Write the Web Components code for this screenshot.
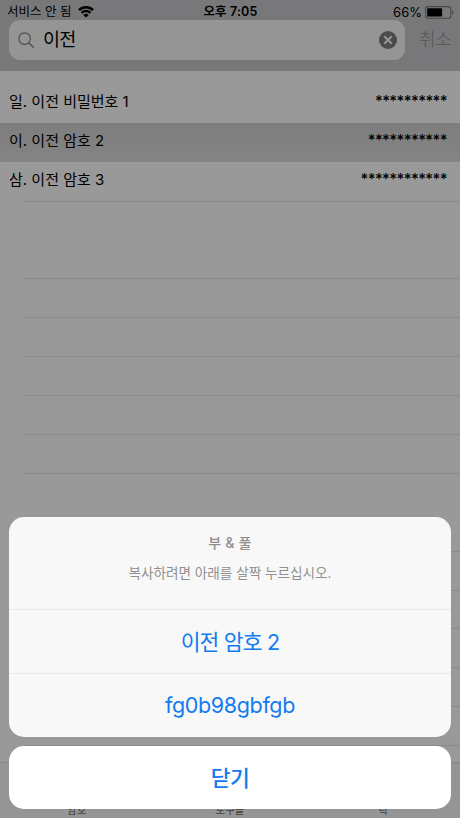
<!DOCTYPE html>
<html lang="ko">
<head>
<meta charset="utf-8">
<title>암호</title>
<style>
  html, body {
    margin: 0;
    height: 100%;
    overflow: hidden;
    background: #999;
  }
  body {
    font-family: Inter, "Noto Sans CJK KR", sans-serif;
    color: #000;
  }
</style>
</head>
<body>
<phone-screen>
  <status-bar carrier="서비스 안 됨" time="오후 7:05" battery="66"></status-bar>
  <search-bar value="이전" cancel="취소"></search-bar>
  <password-list>
    <password-row secret="**********">일. 이전 비밀번호 1</password-row>
    <password-row secret="***********" selected>이. 이전 암호 2</password-row>
    <password-row secret="************" last>삼. 이전 암호 3</password-row>
  </password-list>
  <tab-bar slot="tabs">
    <span>암호</span>
    <span>도구들</span>
    <span>락</span>
  </tab-bar>
  <action-sheet slot="overlay">
    <span slot="title">부 &amp; 풀</span>
    <span slot="message">복사하려면 아래를 살짝 누르십시오.</span>
    <sheet-button>이전 암호 2</sheet-button>
    <sheet-button latin>fg0b98gbfgb</sheet-button>
    <sheet-button slot="cancel" bold>닫기</sheet-button>
  </action-sheet>
</phone-screen>

<script>
// Attach an open shadow root to the element and fill it with the markup.
function render(element, html) {
  element.attachShadow({ mode: "open" }).innerHTML = html;
}

/**
 * The whole screen. The default slot is the page, "tabs" goes at the
 * bottom, and "overlay" is shown on top of a dimmed page.
 */
class PhoneScreen extends HTMLElement {
  constructor() {
    super();
    render(this, `
      <style>
        :host {
          display: block;
          position: relative;
          width: 460px;
          height: 818px;
          overflow: hidden;
        }
        .page {
          display: flex;
          flex-direction: column;
          height: 100%;
          background: #fff;
        }
        .dim {
          position: absolute;
          inset: 0;
          display: flex;
          flex-direction: column;
          justify-content: flex-end;
          padding: 0 9px 9px;
          box-sizing: border-box;
          background: rgba(0, 0, 0, 0.4);
        }
      </style>
      <div class="page"><slot></slot><slot name="tabs"></slot></div>
      <div class="dim"><slot name="overlay"></slot></div>
    `);
  }
}

class StatusBar extends HTMLElement {
  connectedCallback() {
    let level = this.getAttribute("battery");
    render(this, `
      <style>
        :host {
          display: grid;
          grid-template-columns: 1fr auto 1fr;
          align-items: center;
          flex: none;
          height: 20px;
          padding: 4px 6px 0 7px;
          box-sizing: border-box;
          background: #c8c8cb;
          font-size: 12.5px;
          line-height: 16px;
          white-space: nowrap;
        }
        div { display: flex; align-items: center; }
        .left { gap: 6px; }
        .time { font-weight: 600; letter-spacing: 0.15px; }
        .right { justify-content: flex-end; gap: 3px; }
        .level { font-size: 13px; }
        svg { display: block; flex: none; }
      </style>
      <div class="left">
        <span>${this.getAttribute("carrier")}</span>
        <svg width="16" height="12" viewBox="0 0 16 12">
          <path d="M1 4.2a9.9 9.9 0 0 1 14 0M3.6 6.9a6.2 6.2 0 0 1 8.8 0" fill="none" stroke="#000" stroke-width="2.4"/>
          <path d="M8 11.6 5.3 9.1a3.8 3.8 0 0 1 5.4 0z"/>
        </svg>
      </div>
      <span class="time">${this.getAttribute("time")}</span>
      <div class="right">
        <span class="level">${level}%</span>
        <svg width="29" height="13" viewBox="0 0 29 13">
          <rect x=".6" y=".6" width="25.3" height="11.6" rx="2.8" fill="none" stroke="#777" stroke-width="1.1"/>
          <rect x="2.2" y="2.3" width="${22.6 * level / 100}" height="8.2" rx="1"/>
          <path d="M27.2 4.5q1.3.6 1.3 2t-1.3 2z" fill="#777"/>
        </svg>
      </div>
    `);
  }
}

class SearchBar extends HTMLElement {
  connectedCallback() {
    render(this, `
      <style>
        :host {
          display: flex;
          align-items: flex-start;
          flex: none;
          height: 51px;
          padding: 0 9px;
          box-sizing: border-box;
          background: #c8c8cb;
        }
        .field {
          display: flex;
          align-items: center;
          width: 396px;
          height: 40px;
          padding: 0 8px 0 9px;
          box-sizing: border-box;
          border-radius: 11px;
          background: #f9f9fa;
        }
        .value {
          flex: 1;
          margin-left: 8px;
          font-size: 18.5px;
          line-height: 39px;
          padding-bottom: 1px;
          letter-spacing: -0.8px;
        }
        .cancel {
          flex: 1;
          text-align: right;
          font-size: 18px;
          font-weight: 300;
          line-height: 39px;
          letter-spacing: -0.5px;
          color: #8e8e92;
        }
        svg { display: block; flex: none; }
      </style>
      <div class="field">
        <svg width="17" height="17" viewBox="0 0 17 17" fill="none" stroke="#88888c">
          <circle cx="6.6" cy="6.6" r="5.8" stroke-width="1.2"/>
          <path d="m10.8 10.8 5 5" stroke-width="1.6"/>
        </svg>
        <span class="value">${this.getAttribute("value")}</span>
        <svg width="18" height="18" viewBox="0 0 18 18">
          <circle cx="9" cy="9" r="9" fill="#7d7d82"/>
          <path d="m5.3 5.3 7.4 7.4m0-7.4-7.4 7.4" stroke="#f9f9fa" stroke-width="2"/>
        </svg>
      </div>
      <span class="cancel">${this.getAttribute("cancel")}</span>
    `);
  }
}

/**
 * The passwords, followed by the rules of the empty rows that fill the
 * rest of the table.
 */
class PasswordList extends HTMLElement {
  constructor() {
    super();
    let empty = [77, 39, 39, 39, 39, 39, 78, 39, 38, 39, 39, 39]
      .map(height => `<div style="height:${height}px"></div>`).join("");
    render(this, `
      <style>
        :host {
          display: block;
          flex: 1;
          min-height: 0;
          overflow: hidden;
          padding-top: 13px;
          box-sizing: border-box;
        }
        div {
          margin-left: 24px;
          box-sizing: border-box;
          border-bottom: 1px solid #e8e8ea;
        }
      </style>
      <slot></slot>${empty}
    `);
  }
}

class PasswordRow extends HTMLElement {
  connectedCallback() {
    render(this, `
      <style>
        :host {
          display: flex;
          justify-content: space-between;
          height: 39px;
          padding: 0 13px 0 9px;
          box-sizing: border-box;
          font-size: 15px;
          line-height: 35px;
          white-space: nowrap;
        }
        :host([selected]) { background: linear-gradient(#d2d2d2, #dcdcdc); }
        :host([last]) {
          height: 40px;
          background: linear-gradient(#e8e8ea, #e8e8ea) 24px 100% / 100% 1px no-repeat;
        }
        .secret {
          font-weight: 500;
          line-height: 34px;
          letter-spacing: -0.6px;
        }
      </style>
      <span><slot></slot></span>
      <span class="secret">${this.getAttribute("secret")}</span>
    `);
  }
}

class TabBar extends HTMLElement {
  constructor() {
    super();
    render(this, `
      <style>
        :host {
          display: grid;
          grid-template-columns: repeat(3, 1fr);
          align-items: end;
          flex: none;
          height: 56px;
          box-sizing: border-box;
          border-top: 1px solid #e2e2e2;
          background: #f8f8f8;
          font-size: 10.5px;
          line-height: 14px;
          text-align: center;
          color: #6c6c6c;
        }
      </style>
      <slot></slot>
    `);
  }
}

class ActionSheet extends HTMLElement {
  constructor() {
    super();
    render(this, `
      <style>
        :host {
          display: flex;
          flex-direction: column;
          gap: 9px;
          text-align: center;
        }
        .card, .cancel {
          overflow: hidden;
          border-radius: 15px;
        }
        .card { height: 219.5px; background: #f8f8f8; }
        .cancel { height: 63.5px; background: #fff; }
        header {
          display: flex;
          flex-direction: column;
          gap: 10px;
          height: 92px;
          padding-top: 15px;
          box-sizing: border-box;
          font-size: 13.6px;
          line-height: 21px;
          color: #8f8f8f;
        }
        .title {
          font-size: 14px;
          font-weight: 500;
          letter-spacing: 0.2px;
        }
      </style>
      <div class="card">
        <header>
          <div class="title"><slot name="title"></slot></div>
          <div><slot name="message"></slot></div>
        </header>
        <slot></slot>
      </div>
      <div class="cancel"><slot name="cancel"></slot></div>
    `);
  }
}

class SheetButton extends HTMLElement {
  constructor() {
    super();
    render(this, `
      <style>
        :host {
          display: block;
          height: 64px;
          box-sizing: border-box;
          border-top: 1px solid #e9e9e9;
          font-size: 21.5px;
          line-height: 64px;
          letter-spacing: -0.8px;
          color: #127bef;
          cursor: pointer;
        }
        :host([latin]) {
          font-size: 21.5px;
          letter-spacing: -0.35px;
          line-height: 63px;
        }
        :host([bold]) {
          border-top: 0;
          font-weight: 500;
          letter-spacing: -0.5px;
        }
      </style>
      <slot></slot>
    `);
  }
}

customElements.define("phone-screen", PhoneScreen);
customElements.define("status-bar", StatusBar);
customElements.define("search-bar", SearchBar);
customElements.define("password-list", PasswordList);
customElements.define("password-row", PasswordRow);
customElements.define("tab-bar", TabBar);
customElements.define("action-sheet", ActionSheet);
customElements.define("sheet-button", SheetButton);
</script>
</body>
</html>
